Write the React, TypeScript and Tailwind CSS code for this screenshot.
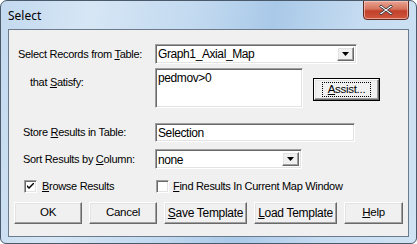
import React from 'react';

const sunken =
  'bg-white border border-t-[#a0a0a0] border-l-[#a0a0a0] border-r-white border-b-white shadow-[inset_1px_1px_0_#696969,inset_-1px_-1px_0_#e3e3e3]';
const raised =
  'bg-[#f0f0f0] border border-t-white border-l-white border-r-[#696969] border-b-[#696969] shadow-[inset_-1px_-1px_0_#a0a0a0,inset_1px_1px_0_#e3e3e3]';

function U({ children }: { children: React.ReactNode }) {
  return <span className="underline underline-offset-[1px]">{children}</span>;
}

function DropArrow() {
  return (
    <div className={`${raised} w-[17px] h-[14px] flex items-center justify-center`}>
      <svg width="7" height="4" viewBox="0 0 7 4">
        <path d="M0 0h7L3.5 4z" fill="#000" />
      </svg>
    </div>
  );
}

function Check({ checked }: { checked?: boolean }) {
  return (
    <div className={`${sunken} w-[13px] h-[13px] flex items-center justify-center`}>
      {checked && (
        <svg width="7" height="7" viewBox="0 0 7 7">
          <path d="M0 2v2l2 2 5-5V-1L2 4z" fill="#000" />
        </svg>
      )}
    </div>
  );
}

function Btn({ children, w }: { children: React.ReactNode; w: string }) {
  return (
    <div className={`${raised} ${w} h-[22px] flex items-center justify-center text-[11.5px] text-black whitespace-nowrap`}>
      {children}
    </div>
  );
}

export default function App() {
  return (
    <div
      className="w-[417px] h-[244px] relative overflow-hidden rounded-t-[7px] rounded-b-[6px] border border-[#4b5a6b] bg-[linear-gradient(100deg,#c3d9ef_0%,#d6e6f5_20%,#c0d8ef_45%,#a9c9e8_60%,#c6dcf1_80%,#d0e3f4_100%)] flex flex-col"
      style={{ fontFamily: '"Liberation Sans", Arial, sans-serif' }}
    >
      {/* title bar */}
      <div className="h-[28px] flex items-start justify-between">
        <div className="pl-[7px] pt-[6px] text-[12px] text-black" style={{ fontFamily: '"Noto Sans", "Liberation Sans", sans-serif' }}>
          Select
        </div>
        <div className="mr-[7px] -mt-px w-[46px] h-[20px] rounded-b-[4px] border border-[#5f2a22] bg-[linear-gradient(180deg,#e8a493_0%,#d5735c_45%,#c1402a_55%,#d0583e_100%)] shadow-[inset_0_0_0_1px_rgba(255,210,200,0.6)] flex items-center justify-center">
          <svg width="14" height="12" viewBox="0 0 14 12">
            <path d="M2 1l5 4 5-4 1.5 1.5L8.5 6l5 3.5L12 11 7 7l-5 4-1.5-1.5L5.5 6 .5 2.5z" fill="#fff" stroke="#3c3c46" strokeWidth="1" strokeLinejoin="round" />
          </svg>
        </div>
      </div>

      {/* client area */}
      <div className="mx-[7px] h-[208px] border border-[#6c7b8c] bg-[#f0f0f0] text-[11px] tracking-[-0.3px] text-black whitespace-nowrap flex flex-col">
        <div className="flex flex-col pt-[14px] pl-[9px]">
          {/* row 1 */}
          <div className="flex items-center h-[20px]">
            <div className="w-[137px]">
              Select Records from <U>T</U>able:
            </div>
            <div className={`${sunken} w-[202px] h-[20px] flex items-center justify-between pl-[2px] pr-[2px]`}>
              <span className="text-[12px] tracking-[-0.4px]">Graph1_Axial_Map</span>
              <DropArrow />
            </div>
          </div>

          {/* row 2 */}
          <div className="flex items-start mt-[4px] h-[40px]">
            <div className="w-[137px] pl-[12px] pt-[6px]">
              that <U>S</U>atisfy:
            </div>
            <div className={`${sunken} w-[148px] h-[40px] pl-[2px] pt-[2px] text-[12px] tracking-[-0.4px] leading-[15px]`}>pedmov&gt;0</div>
            <div className="ml-[10px] mt-[10px] w-[67px] h-[23px] border border-black">
              <div className={`${raised} w-full h-full flex items-center justify-center`}>
                <div className="border border-dotted border-black px-[5px] leading-[13px] text-[11.5px]">
                  <U>A</U>ssist...
                </div>
              </div>
            </div>
          </div>

          {/* row 3 */}
          <div className="flex items-center mt-[15px] h-[19px]">
            <div className="w-[137px] pl-[5px]">
              Store <U>R</U>esults in Table:
            </div>
            <div className={`${sunken} w-[200px] h-[19px] pl-[2px] flex items-center text-[12px] tracking-[-0.4px]`}>Selection</div>
          </div>

          {/* row 4 */}
          <div className="flex items-center mt-[7px] h-[20px]">
            <div className="w-[137px] pl-[5px]">
              Sort Results by <U>C</U>olumn:
            </div>
            <div className={`${sunken} w-[147px] h-[20px] flex items-center justify-between pl-[2px] pr-[2px]`}>
              <span className="text-[12px] tracking-[-0.4px] pt-[2px]">none</span>
              <DropArrow />
            </div>
          </div>

          {/* row 5 */}
          <div className="flex items-center mt-[10px] h-[14px]">
            <div className="w-[138px] pl-[6px] flex items-center gap-[5px]">
              <Check checked />
              <span>
                <U>B</U>rowse Results
              </span>
            </div>
            <div className="flex items-center gap-[4px]">
              <Check />
              <span>
                <U>F</U>ind Results In Current Map Window
              </span>
            </div>
          </div>
        </div>

        {/* buttons */}
        <div className="flex items-center mt-[9px] pl-[5px]">
          <Btn w="w-[68px]">OK</Btn>
          <div className="w-[7px]" />
          <Btn w="w-[68px]">Cancel</Btn>
          <div className="w-[7px]" />
          <Btn w="w-[83px]">
            <span className="text-[12px] tracking-[-0.3px]"><U>S</U>ave Template</span>
          </Btn>
          <div className="w-[7px]" />
          <Btn w="w-[83px]">
            <span className="text-[12px] tracking-[-0.3px]"><U>L</U>oad Template</span>
          </Btn>
          <div className="w-[7px]" />
          <Btn w="w-[59px]">
            <U>H</U>elp
          </Btn>
        </div>
      </div>
    </div>
  );
}
